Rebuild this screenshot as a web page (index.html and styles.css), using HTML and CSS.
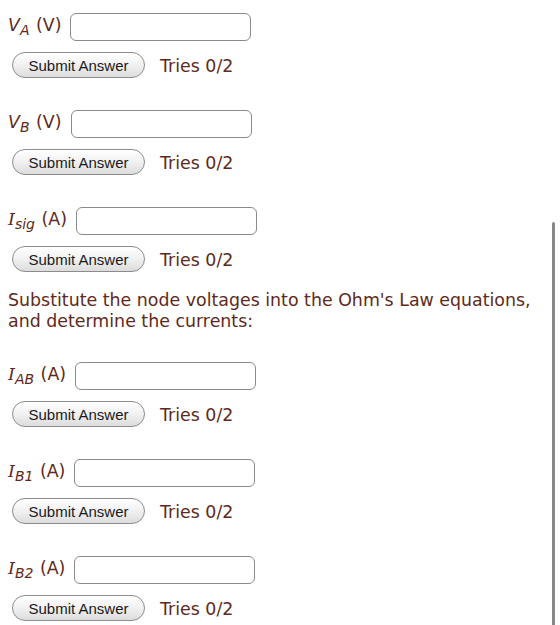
FILE: index.html
```html
<!DOCTYPE html>
<html lang="en">
<head>
  <meta charset="UTF-8" />
  <title>Node Voltages</title>
<link rel="stylesheet" href="styles.css">
</head>
<body>
  <div class="pregunta">
    <div class="fila">
      <label class="etiqueta"><i>V</i><sub>A</sub> (V)</label>
      <input type="text" class="respuesta" />
    </div>
    <div class="fila acciones">
      <button class="enviar">Submit Answer</button>
      <span class="intentos">Tries 0/2</span>
    </div>
  </div>

  <div class="pregunta">
    <div class="fila">
      <label class="etiqueta"><i>V</i><sub>B</sub> (V)</label>
      <input type="text" class="respuesta" />
    </div>
    <div class="fila acciones">
      <button class="enviar">Submit Answer</button>
      <span class="intentos">Tries 0/2</span>
    </div>
  </div>

  <div class="pregunta">
    <div class="fila">
      <label class="etiqueta"><i class="mat">I</i><sub>sig</sub> (A)</label>
      <input type="text" class="respuesta" />
    </div>
    <div class="fila acciones">
      <button class="enviar">Submit Answer</button>
      <span class="intentos">Tries 0/2</span>
    </div>
  </div>

  <p class="texto">Substitute the node voltages into the Ohm's Law equations, and determine the currents:</p>

  <div class="pregunta">
    <div class="fila">
      <label class="etiqueta"><i class="mat">I</i><sub>AB</sub> (A)</label>
      <input type="text" class="respuesta" />
    </div>
    <div class="fila acciones">
      <button class="enviar">Submit Answer</button>
      <span class="intentos">Tries 0/2</span>
    </div>
  </div>

  <div class="pregunta">
    <div class="fila">
      <label class="etiqueta"><i class="mat">I</i><sub>B1</sub> (A)</label>
      <input type="text" class="respuesta" />
    </div>
    <div class="fila acciones">
      <button class="enviar">Submit Answer</button>
      <span class="intentos">Tries 0/2</span>
    </div>
  </div>

  <div class="pregunta">
    <div class="fila">
      <label class="etiqueta"><i class="mat">I</i><sub>B2</sub> (A)</label>
      <input type="text" class="respuesta" />
    </div>
    <div class="fila acciones">
      <button class="enviar">Submit Answer</button>
      <span class="intentos">Tries 0/2</span>
    </div>
  </div>

  <div class="barra"></div>
</body>
</html>
```

FILE: styles.css
```css
body {
  font-family: 'DejaVu Sans', Verdana, sans-serif;
  font-size: 17.4px;
  color: #5e2a20;
  background-color: #ffffff;
  margin: 0;
  padding: 13px 8px 0 8px;
  overflow: hidden;
}

.pregunta {
  display: flex;
  flex-direction: column;
  gap: 11px;
  margin-bottom: 32px;
}

.fila {
  display: flex;
  align-items: center;
  gap: 9px;
  height: 28px;
}

.fila.acciones {
  height: 26px;
}

.etiqueta {
  line-height: 28px;
  white-space: nowrap;
  margin-top: -4px;
}

.etiqueta i {
  font-style: oblique;
}

.etiqueta .mat {
  font-family: 'DejaVu Serif', serif;
  font-style: italic;
}

.etiqueta sub {
  font-size: 14px;
  font-style: oblique;
  line-height: 0;
  vertical-align: -4px;
  margin-right: 1px;
}

.respuesta {
  box-sizing: border-box;
  width: 181px;
  height: 28px;
  border: 1px solid #8a8a8a;
  border-radius: 6px;
  background: #ffffff;
}

.enviar {
  box-sizing: border-box;
  height: 26px;
  width: 133px;
  margin-left: 4px;
  padding: 0;
  font-family: 'Liberation Sans', Arial, sans-serif;
  font-size: 15px;
  color: #1a1a1a;
  border: 1px solid #8c8c8c;
  border-radius: 13px;
  background: linear-gradient(#ffffff, #f1f1f1 50%, #dcdcdc);
}

.intentos {
  margin-left: 6px;
  padding-top: 2px;
}

.texto {
  margin: -14px 0 30px 0;
  line-height: 21px;
}

/* scroll indicator on the right edge */
.barra {
  position: fixed;
  top: 222px;
  right: 5px;
  width: 3px;
  height: 420px;
  border-radius: 2px;
  background: #888888;
}
```
